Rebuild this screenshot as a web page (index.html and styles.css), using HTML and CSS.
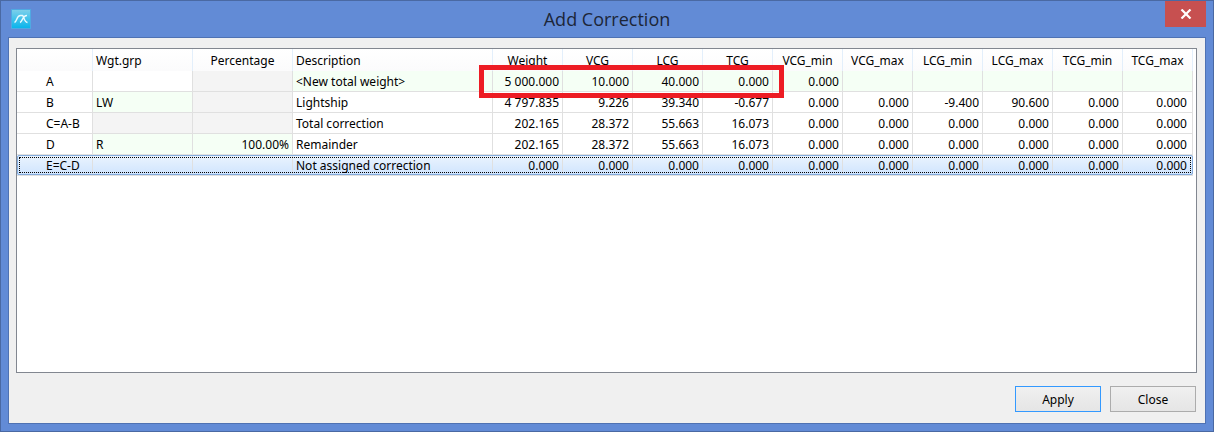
FILE: index.html
```
<!DOCTYPE html>
<html lang="en">

<head>
  <meta charset="UTF-8">
  <meta name="viewport" content="width=device-width, initial-scale=1.0">
  <title>Add Correction</title>
  <link rel="stylesheet" href="styles.css">
</head>

<body>
  <div class="window">
    <header class="titlebar">
      <svg class="logo" width="20" height="20" viewBox="0 0 20 20" aria-hidden="true">
        <defs>
          <linearGradient id="sky" x1="0" y1="0" x2="0" y2="1">
            <stop offset="0" stop-color="#7fd0ea" />
            <stop offset="1" stop-color="#06b4ec" />
          </linearGradient>
        </defs>
        <rect x="0.5" y="0.5" width="19" height="19" fill="url(#sky)" stroke="#4fa9e2" />
        <path d="M3.500 13.500C6 12.500 5.500 6.500 9.500 6.500L11.500 6.500C13 7 13 13 16.500 13.500M9 13.500C11.500 12.500 11.500 6.500 16 6.500" fill="none" stroke="#e8faff" stroke-width="1.400" />
      </svg>
      <h1>Add Correction</h1>
      <button class="close-x" type="button" aria-label="Close window">
        <svg width="12" height="10" viewBox="0 0 12 10" aria-hidden="true">
          <path d="M1.500 0.500L10.500 9.500M10.500 0.500L1.500 9.500" stroke="#fff" stroke-width="2.200" />
        </svg>
      </button>
    </header>

    <main class="client">
      <div class="panel">
        <table class="grid">
          <colgroup>
            <col class="col-id">
            <col class="col-text" span="2">
            <col class="col-desc">
            <col class="col-num" span="10">
          </colgroup>
          <thead>
            <tr>
              <th></th>
              <th class="left">Wgt.grp</th>
              <th>Percentage</th>
              <th class="left">Description</th>
              <th>Weight</th>
              <th>VCG</th>
              <th>LCG</th>
              <th>TCG</th>
              <th>VCG_min</th>
              <th>VCG_max</th>
              <th>LCG_min</th>
              <th>LCG_max</th>
              <th>TCG_min</th>
              <th>TCG_max</th>
            </tr>
          </thead>
          <tbody>
            <tr class="editable">
              <td class="id">A</td>
              <td class="left plain"></td>
              <td class="off"></td>
              <td class="left">&lt;New total weight&gt;</td>
              <td>5 000.000</td>
              <td>10.000</td>
              <td>40.000</td>
              <td>0.000</td>
              <td>0.000</td>
              <td></td>
              <td></td>
              <td></td>
              <td></td>
              <td></td>
            </tr>
            <tr>
              <td class="id">B</td>
              <td class="left edit">LW</td>
              <td class="off"></td>
              <td class="left">Lightship</td>
              <td>4 797.835</td>
              <td>9.226</td>
              <td>39.340</td>
              <td>-0.677</td>
              <td>0.000</td>
              <td>0.000</td>
              <td>-9.400</td>
              <td>90.600</td>
              <td>0.000</td>
              <td>0.000</td>
            </tr>
            <tr>
              <td class="id">C=A-B</td>
              <td class="off"></td>
              <td class="off"></td>
              <td class="left">Total correction</td>
              <td>202.165</td>
              <td>28.372</td>
              <td>55.663</td>
              <td>16.073</td>
              <td>0.000</td>
              <td>0.000</td>
              <td>0.000</td>
              <td>0.000</td>
              <td>0.000</td>
              <td>0.000</td>
            </tr>
            <tr>
              <td class="id">D</td>
              <td class="left edit">R</td>
              <td class="edit">100.00%</td>
              <td class="left">Remainder</td>
              <td>202.165</td>
              <td>28.372</td>
              <td>55.663</td>
              <td>16.073</td>
              <td>0.000</td>
              <td>0.000</td>
              <td>0.000</td>
              <td>0.000</td>
              <td>0.000</td>
              <td>0.000</td>
            </tr>
            <tr class="selected">
              <td class="id">E=C-D</td>
              <td></td>
              <td></td>
              <td class="left">Not assigned correction</td>
              <td>0.000</td>
              <td>0.000</td>
              <td>0.000</td>
              <td>0.000</td>
              <td>0.000</td>
              <td>0.000</td>
              <td>0.000</td>
              <td>0.000</td>
              <td>0.000</td>
              <td>0.000</td>
            </tr>
          </tbody>
        </table>
        <div class="marker"></div>
      </div>

      <div class="buttons">
        <button class="btn default" type="button">Apply</button>
        <button class="btn" type="button">Close</button>
      </div>
    </main>
  </div>
</body>

</html>
```
FILE: styles.css
```
* {
  box-sizing: border-box;
}

body {
  margin: 0;
  color: #000;
  font-family: Tahoma, "Noto Sans", "DejaVu Sans", sans-serif;
  font-size: 12px;
}

.window {
  display: flex;
  flex-direction: column;
  min-height: 100vh;
  padding: 0 7px 7px;
  background: #628bd6;
  border: 1px solid #4a69a3;
}

/* title bar */
.titlebar {
  display: grid;
  grid-template-columns: 1fr auto 1fr;
  height: 36px;
}

.logo {
  margin: 8px 0 0 3px;
}

.titlebar h1 {
  margin: 0;
  font-family: "Segoe UI", "Open Sans", sans-serif;
  font-size: 18px;
  font-weight: 400;
  line-height: 36px;
  color: #1c2638;
}

.close-x {
  display: flex;
  align-items: center;
  justify-content: center;
  justify-self: end;
  width: 41px;
  height: 26px;
  padding: 0;
  background: #c75050;
  border: 0;
}

/* dialog body */
.client {
  display: flex;
  flex: 1;
  flex-direction: column;
  padding: 10px 8px 11px 7px;
  background: #f0f0f0;
  border: 1px solid #4f72b3;
}

.panel {
  position: relative;
  flex: 1;
  background: #fff;
  border: 1px solid #828790;
}

/* table */
.grid {
  width: 1176px;
  table-layout: fixed;
  border-collapse: separate;
  border-spacing: 0;
  line-height: 18px;
}

.col-id {
  width: 76px;
}

.col-text {
  width: 100px;
}

.col-desc {
  width: 200px;
}

.col-num {
  width: 70px;
}

.grid th {
  height: 22px;
  padding: 2px 0 0;
  font-weight: 400;
  background: linear-gradient(#fff, #fbfbfc);
  border-right: 1px solid #e3effb;
}

.grid td {
  height: 21px;
  padding: 2px 3px 0;
  text-align: right;
  white-space: nowrap;
  border-right: 1px solid #e0e0e0;
  border-bottom: 1px solid #e0e0e0;
}

.grid td:last-child {
  padding-right: 5px;
}

.grid .left {
  padding-left: 3px;
  text-align: left;
}

.grid .id {
  padding-left: 29px;
  text-align: left;
  background: #fff;
}

.editable td,
.grid .edit {
  background: #f5fff5;
}

.grid .plain {
  background: #fff;
}

.grid .off {
  background: #f4f4f4;
}

.selected {
  position: relative;
}

.grid .selected td {
  background: linear-gradient(#ebf4fe, #cfe4fe);
}

.selected::after {
  content: "";
  position: absolute;
  inset: 0 0 1px;
  border: 1px solid #84acdd;
  border-radius: 2px;
  outline: 1px dotted #000;
  outline-offset: -3px;
}

/* highlight around the new totals */
.marker {
  position: absolute;
  top: 16px;
  left: 462px;
  width: 305px;
  height: 33px;
  border: 5px solid #ed1c24;
}

/* buttons */
.buttons {
  display: flex;
  justify-content: flex-end;
  gap: 9px;
  margin-top: 13px;
  padding-right: 1px;
}

.btn {
  width: 86px;
  height: 26px;
  padding: 0;
  font: inherit;
  color: #000;
  background: linear-gradient(#f0f0f0, #e5e5e5);
  border: 1px solid #acacac;
}

.btn.default {
  border-color: #3399ff;
}
```
